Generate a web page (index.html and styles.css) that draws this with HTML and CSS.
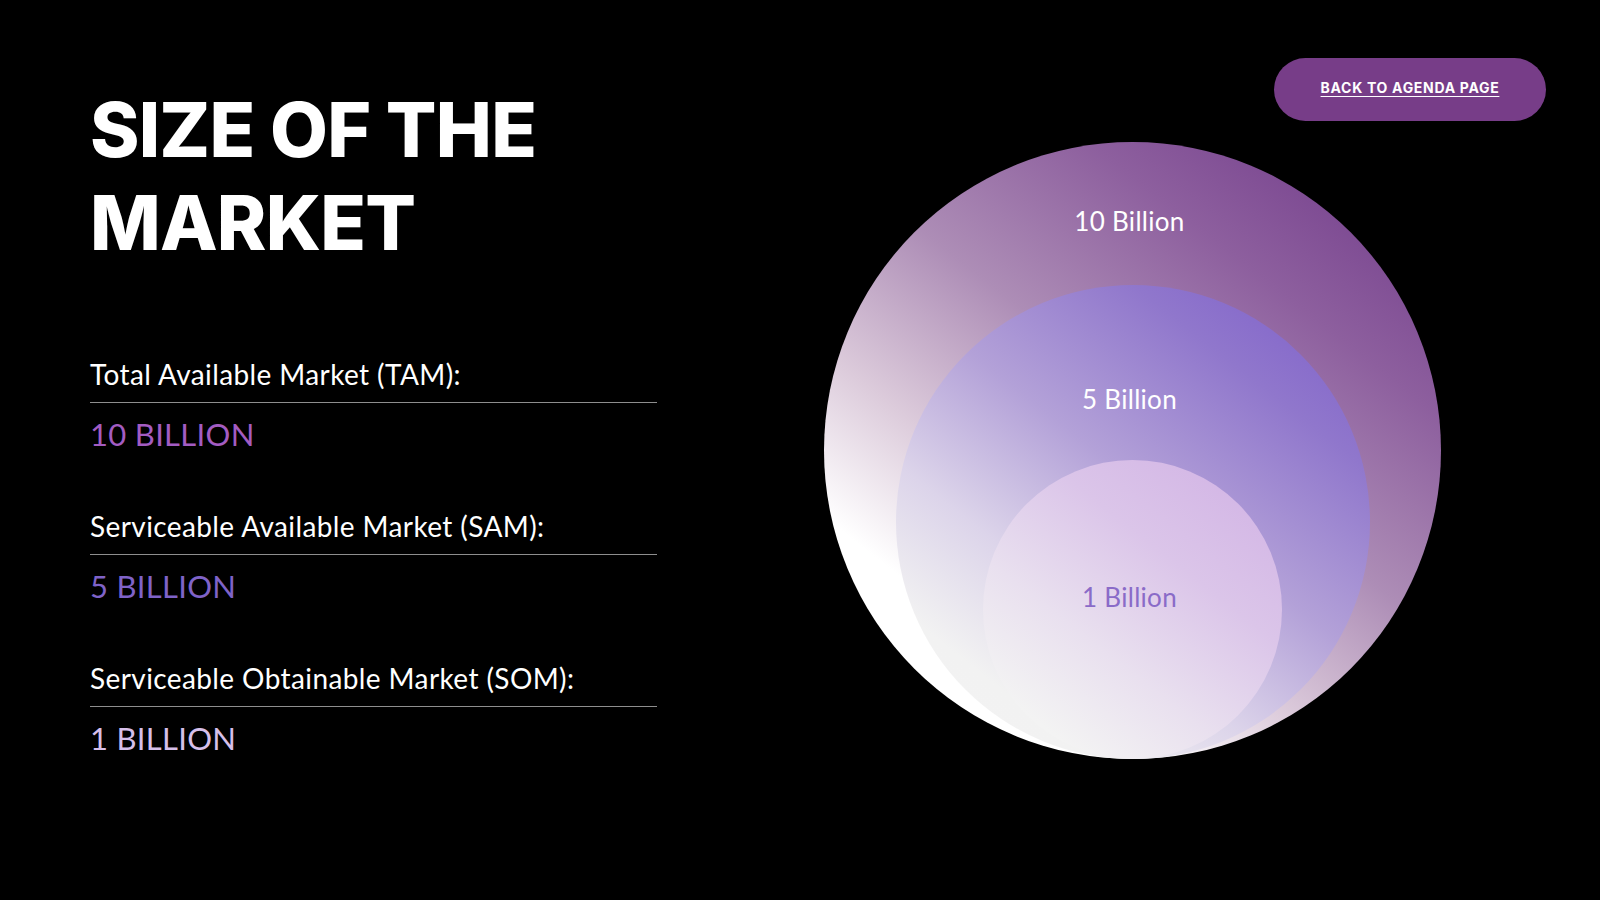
FILE: index.html
```html
<!DOCTYPE html>
<html lang="en">
<head>
<meta charset="utf-8">
<title>Size of the Market</title>
<link rel="stylesheet" href="styles.css">
</head>
<body>
<div class="slide">
  <section class="left">
    <h1 class="title">SIZE OF THE<br>MARKET</h1>
    <div class="metrics">
      <div class="metric">
        <div class="metric-label">Total Available Market (TAM):</div>
        <div class="metric-value tam">10 BILLION</div>
      </div>
      <div class="metric">
        <div class="metric-label">Serviceable Available Market (SAM):</div>
        <div class="metric-value sam">5 BILLION</div>
      </div>
      <div class="metric">
        <div class="metric-label">Serviceable Obtainable Market (SOM):</div>
        <div class="metric-value som">1 BILLION</div>
      </div>
    </div>
  </section>
  <section class="right">
    <div class="btn-row">
      <a class="back-btn" href="#">BACK TO AGENDA PAGE</a>
    </div>
    <div class="chart">
      <div class="circle outer">
        <div class="circle-label l-outer">10 Billion</div>
        <div class="circle middle">
          <div class="circle-label l-middle">5 Billion</div>
          <div class="circle inner">
            <div class="circle-label l-inner">1 Billion</div>
          </div>
        </div>
      </div>
    </div>
  </section>
</div>
</body>
</html>
```

FILE: styles.css
```css
* { box-sizing: border-box; }
html, body { margin: 0; padding: 0; background: #000; }
body { font-family: "Lato", "Liberation Sans", sans-serif; color: #fff; }

.slide {
  width: 1600px;
  height: 900px;
  display: flex;
  background: #000;
}

.left {
  width: 657px;
  padding-left: 90px;
  padding-top: 83px;
}

.title {
  margin: 0;
  font-family: "Inter", "Liberation Sans", sans-serif;
  font-weight: 800;
  font-size: 75px;
  line-height: 93px;
  letter-spacing: -0.8px;
  color: #fff;
}

.metrics {
  margin-top: 88px;
  display: flex;
  flex-direction: column;
  gap: 57px;
}

.metric-label {
  font-size: 28px;
  line-height: 34px;
  padding-bottom: 11px;
  border-bottom: 1.5px solid #8e8e8e;
  letter-spacing: 0.4px;
}

.metric-value {
  font-size: 31px;
  line-height: 36px;
  margin-top: 13px;
  letter-spacing: 0.3px;
}
.tam { color: #a35cc2; }
.sam { color: #7f63c8; }
.som { color: #d6bfea; }

.right {
  flex: 1;
  display: flex;
  flex-direction: column;
  padding: 58px 54px 0 0;
}

.btn-row {
  display: flex;
  justify-content: flex-end;
}

.back-btn {
  width: 272px;
  height: 63px;
  padding-bottom: 4px;
  border-radius: 32px;
  background: #773d88;
  color: #fff;
  font-family: "Inter", "Liberation Sans", sans-serif;
  font-weight: 700;
  font-size: 14px;
  letter-spacing: 0.7px;
  text-decoration: underline;
  text-underline-offset: 3px;
  display: flex;
  align-items: center;
  justify-content: center;
}

.chart {
  margin-top: 21px;
  margin-left: 167px;
}

.circle {
  border-radius: 50%;
  display: flex;
  flex-direction: column;
  align-items: center;
}

.outer {
  width: 617px;
  height: 617px;
  background: linear-gradient(218deg, #6c3486 0%, #8d5f9e 25%, #ad8db6 45%, #dccbdb 63%, #ffffff 78%, #ffffff 100%);
}

.middle {
  width: 474px;
  height: 474px;
  margin-top: auto;
  background: linear-gradient(218deg, #7a5ac9 0%, #9077cc 22%, #b3a1d8 45%, #dcd4ea 65%, #f2f2f2 82%, #f3f3f3 100%);
}

.inner {
  width: 299px;
  height: 299px;
  margin-top: auto;
  background: linear-gradient(218deg, #d0b0e4 0%, #dbc5e9 35%, #e9e0ef 62%, #f3f3f3 85%);
}

.circle-label {
  font-size: 26px;
  line-height: 30px;
  letter-spacing: 0.3px;
  margin-right: 6px;
}
.l-outer { margin-top: 64px; color: #fff; }
.l-middle { margin-top: 99px; color: #fff; }
.l-inner { margin-top: 122px; color: #8a6bc8; }
```
